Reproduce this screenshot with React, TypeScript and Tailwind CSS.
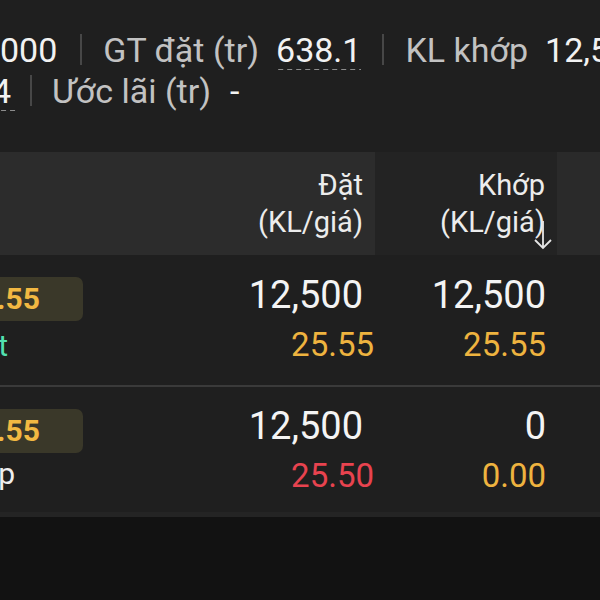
import React from "react";

const font = { fontFamily: "Roboto, 'Noto Sans', sans-serif" };

function Sep({ className = "mx-[22px]" }: { className?: string }) {
  return <span className={`inline-block w-[2px] h-[31px] bg-[#474747] align-[-3px] ${className}`} />;
}

function Dashed({ children, className = "" }: { children: React.ReactNode; className?: string }) {
  return (
    <span
      className={`text-[#f2f2f2] bg-[linear-gradient(to_right,#8c8c8c_60%,transparent_60%)] bg-[length:9px_1px] bg-repeat-x bg-bottom ${className}`}
    >
      {children}
    </span>
  );
}

interface OrderRow {
  status: string;
  statusClass: string;
  statusEnd: string;
  statusGap: string;
  placedQty: string;
  placedPrice: string;
  placedPriceClass: string;
  matchedQty: string;
  matchedPrice: string;
  pt: string;
}

const rows: OrderRow[] = [
  {
    status: "Khớp hết",
    statusClass: "text-[#52e0b0]",
    statusEnd: "w-[8px]",
    statusGap: "mt-[7px]",
    placedQty: "12,500",
    placedPrice: "25.55",
    placedPriceClass: "text-[#eeb33f]",
    matchedQty: "12,500",
    matchedPrice: "25.55",
    pt: "pt-[18px]",
  },
  {
    status: "Chờ khớp",
    statusClass: "text-[#eeeeee]",
    statusEnd: "w-[15px]",
    statusGap: "mt-[3px]",
    placedQty: "12,500",
    placedPrice: "25.50",
    placedPriceClass: "text-[#e8434f]",
    matchedQty: "0",
    matchedPrice: "0.00",
    pt: "pt-[17px]",
  },
];

export default function App() {
  return (
    <div className="w-[600px] h-[600px] overflow-hidden bg-[#121212] flex flex-col" style={font}>
      {/* summary */}
      <div className="bg-[#1f1f1f] h-[152px] pt-[30px] text-[34px] leading-[41px] text-[#c2c2c2] whitespace-nowrap">
        <div>
          <span className="text-[#f2f2f2]">000</span>
          <Sep className="ml-[23px] mr-[21px]" />
          <span>GT đặt (tr)</span>
          <Dashed className="ml-[17px]">638.1</Dashed>
          <Sep className="ml-[21px] mr-[21px]" />
          <span>KL khớp</span>
          <span className="ml-[17px] text-[#f2f2f2]">12,500</span>
        </div>
        <div>
          <Dashed className="inline-block ml-[-8px] pr-[8px] leading-[39px]">4</Dashed>
          <Sep className="ml-[11px] mr-[20px]" />
          <span>Ước lãi (tr)</span>
          <span className="ml-[19px] text-[#f2f2f2]">-</span>
        </div>
      </div>

      {/* table header */}
      <div className="grid grid-cols-[375px_182px_1fr] h-[103px] text-[29px] leading-[37px] text-[#ececec]">
        <div className="bg-[#2c2c2c] pt-[15px] pr-[12px] text-right">
          <div>Đặt</div>
          <div>(KL/giá)</div>
        </div>
        <div className="relative bg-[#232323] pt-[15px] pr-[12px] text-right">
          <div>Khớp</div>
          <div>(KL/giá)</div>
          <svg className="absolute right-[4px] top-[68px]" width="20" height="30" viewBox="0 0 20 30">
            <path d="M10 1 V28 M2 20 L10 28 L18 20" fill="none" stroke="#e6e6e6" strokeWidth="1.8" />
          </svg>
        </div>
        <div className="bg-[#2a2a2a]" />
      </div>

      {/* rows */}
      {rows.map((r, i) => (
        <div
          key={i}
          className={`grid grid-cols-[193px_182px_182px_1fr] bg-[#1f1f1f] ${
            i === 0 ? "border-b-2 border-[#3a3a3a] h-[132px]" : "border-b-[5px] border-[#242424] h-[130px]"
          }`}
        >
          <div className="pt-[22px]">
            <div className="ml-[-58px] w-[141px] h-[44px] rounded-[7px] bg-[#3a3829] flex items-center justify-end pr-[43px] text-[30px] leading-[44px] font-bold text-[#f2b842]">
              25.55
            </div>
            <div className={`${r.statusGap} ${r.statusEnd} flex justify-end whitespace-nowrap text-[30px] leading-[36px] ${r.statusClass}`}>
              {r.status}
            </div>
          </div>
          <div className={`${r.pt} text-right`}>
            <div className="pr-[12px] text-[38px] leading-[44px] text-[#f4f4f4]">{r.placedQty}</div>
            <div className={`mt-[8px] pr-[1px] text-[33px] leading-[40px] ${r.placedPriceClass}`}>{r.placedPrice}</div>
          </div>
          <div className={`${r.pt} text-right`}>
            <div className="pr-[11px] text-[38px] leading-[44px] text-[#f4f4f4]">{r.matchedQty}</div>
            <div className="mt-[8px] pr-[11px] text-[33px] leading-[40px] text-[#eeb33f]">{r.matchedPrice}</div>
          </div>
          <div />
        </div>
      ))}
      <div className="flex-1 bg-[#121212]" />
    </div>
  );
}
